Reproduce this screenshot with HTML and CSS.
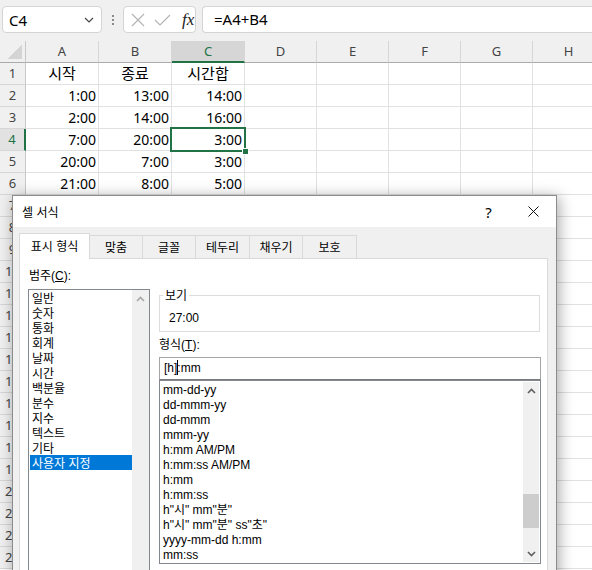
FILE: index.html
```html
<!DOCTYPE html>
<html lang="ko">
    <head>
        <meta charset="UTF-8" />
        <meta name="viewport" content="width=device-width, initial-scale=1.0" />
        <title>셀 서식 - 시간합</title>
        <link rel="stylesheet" href="styles.css">
    </head>
    <body>
        <!-- 수식 입력줄 -->
        <div class="topbar">
            <div class="namebox">
                <span>C4</span>
                <svg width="10" height="6" viewBox="0 0 10 6"><path d="M1 1 L5 5 L9 1" fill="none" stroke="#444" stroke-width="1.2"/></svg>
            </div>
            <div class="dots"><i></i><i></i><i></i></div>
            <div class="fnbox">
                <svg width="14" height="14" viewBox="0 0 14 14"><path d="M1 1 L13 13 M13 1 L1 13" stroke="#b4b4b4" stroke-width="1.2"/></svg>
                <svg width="17" height="12" viewBox="0 0 17 12"><path d="M1 6 L6 11 L16 1" fill="none" stroke="#b4b4b4" stroke-width="1.2"/></svg>
                <span class="fx">fx</span>
            </div>
            <div class="formula">=A4+B4</div>
        </div>

        <!-- 시트 -->
        <div class="grid">
            <div class="corner"></div>
            <div class="ch">A</div><div class="ch">B</div><div class="ch on">C</div><div class="ch">D</div>
            <div class="ch">E</div><div class="ch">F</div><div class="ch">G</div><div class="ch">H</div>

            <div class="rh">1</div><div class="c ctr">시작</div><div class="c ctr">종료</div><div class="c ctr">시간합</div><div class="c"></div><div class="c"></div><div class="c"></div><div class="c"></div><div class="c"></div>
            <div class="rh">2</div><div class="c">1:00</div><div class="c">13:00</div><div class="c">14:00</div><div class="c"></div><div class="c"></div><div class="c"></div><div class="c"></div><div class="c"></div>
            <div class="rh">3</div><div class="c">2:00</div><div class="c">14:00</div><div class="c">16:00</div><div class="c"></div><div class="c"></div><div class="c"></div><div class="c"></div><div class="c"></div>
            <div class="rh on">4</div><div class="c">7:00</div><div class="c">20:00</div><div class="c sel">3:00</div><div class="c"></div><div class="c"></div><div class="c"></div><div class="c"></div><div class="c"></div>
            <div class="rh">5</div><div class="c">20:00</div><div class="c">7:00</div><div class="c">3:00</div><div class="c"></div><div class="c"></div><div class="c"></div><div class="c"></div><div class="c"></div>
            <div class="rh">6</div><div class="c">21:00</div><div class="c">8:00</div><div class="c">5:00</div><div class="c"></div><div class="c"></div><div class="c"></div><div class="c"></div><div class="c"></div>
            <div class="rh">7</div><div class="c"></div><div class="c"></div><div class="c"></div><div class="c"></div><div class="c"></div><div class="c"></div><div class="c"></div><div class="c"></div>
            <div class="rh">8</div><div class="c"></div><div class="c"></div><div class="c"></div><div class="c"></div><div class="c"></div><div class="c"></div><div class="c"></div><div class="c"></div>
            <div class="rh">9</div><div class="c"></div><div class="c"></div><div class="c"></div><div class="c"></div><div class="c"></div><div class="c"></div><div class="c"></div><div class="c"></div>
            <div class="rh">10</div><div class="c"></div><div class="c"></div><div class="c"></div><div class="c"></div><div class="c"></div><div class="c"></div><div class="c"></div><div class="c"></div>
            <div class="rh">11</div><div class="c"></div><div class="c"></div><div class="c"></div><div class="c"></div><div class="c"></div><div class="c"></div><div class="c"></div><div class="c"></div>
            <div class="rh">12</div><div class="c"></div><div class="c"></div><div class="c"></div><div class="c"></div><div class="c"></div><div class="c"></div><div class="c"></div><div class="c"></div>
            <div class="rh">13</div><div class="c"></div><div class="c"></div><div class="c"></div><div class="c"></div><div class="c"></div><div class="c"></div><div class="c"></div><div class="c"></div>
            <div class="rh">14</div><div class="c"></div><div class="c"></div><div class="c"></div><div class="c"></div><div class="c"></div><div class="c"></div><div class="c"></div><div class="c"></div>
            <div class="rh">15</div><div class="c"></div><div class="c"></div><div class="c"></div><div class="c"></div><div class="c"></div><div class="c"></div><div class="c"></div><div class="c"></div>
            <div class="rh">16</div><div class="c"></div><div class="c"></div><div class="c"></div><div class="c"></div><div class="c"></div><div class="c"></div><div class="c"></div><div class="c"></div>
            <div class="rh">17</div><div class="c"></div><div class="c"></div><div class="c"></div><div class="c"></div><div class="c"></div><div class="c"></div><div class="c"></div><div class="c"></div>
            <div class="rh">18</div><div class="c"></div><div class="c"></div><div class="c"></div><div class="c"></div><div class="c"></div><div class="c"></div><div class="c"></div><div class="c"></div>
            <div class="rh">19</div><div class="c"></div><div class="c"></div><div class="c"></div><div class="c"></div><div class="c"></div><div class="c"></div><div class="c"></div><div class="c"></div>
            <div class="rh">20</div><div class="c"></div><div class="c"></div><div class="c"></div><div class="c"></div><div class="c"></div><div class="c"></div><div class="c"></div><div class="c"></div>
            <div class="rh">21</div><div class="c"></div><div class="c"></div><div class="c"></div><div class="c"></div><div class="c"></div><div class="c"></div><div class="c"></div><div class="c"></div>
            <div class="rh">22</div><div class="c"></div><div class="c"></div><div class="c"></div><div class="c"></div><div class="c"></div><div class="c"></div><div class="c"></div><div class="c"></div>
            <div class="rh">23</div><div class="c"></div><div class="c"></div><div class="c"></div><div class="c"></div><div class="c"></div><div class="c"></div><div class="c"></div><div class="c"></div>
        </div>

        <!-- 셀 서식 대화상자 -->
        <div class="dialog">
            <div class="dlg-title">
                <span class="dlg-name">셀 서식</span>
                <span class="dlg-btn help">?</span>
                <span class="dlg-btn">
                    <svg width="11" height="11" viewBox="0 0 11 11"><path d="M0.5 0.5 L10.5 10.5 M10.5 0.5 L0.5 10.5" stroke="#111" stroke-width="1"/></svg>
                </span>
            </div>
            <div class="dlg-body">
                <div class="tabs">
                    <div class="tab active">표시 형식</div>
                    <div class="tab w53">맞춤</div>
                    <div class="tab w53">글꼴</div>
                    <div class="tab w54">테두리</div>
                    <div class="tab w53">채우기</div>
                    <div class="tab w54">보호</div>
                </div>
                <div class="panel">
                    <!-- 범주 -->
                    <div class="leftcol">
                        <div class="lbl">범주(<u>C</u>):</div>
                        <div class="listbox cat">
                            <div class="items">
                                <div>일반</div>
                                <div>숫자</div>
                                <div>통화</div>
                                <div>회계</div>
                                <div>날짜</div>
                                <div>시간</div>
                                <div>백분율</div>
                                <div>분수</div>
                                <div>지수</div>
                                <div>텍스트</div>
                                <div>기타</div>
                                <div class="picked">사용자 지정</div>
                            </div>
                            <div class="sbar">
                                <div class="arrow"><svg width="9" height="6" viewBox="0 0 9 6"><path d="M1 5 L4.5 1.5 L8 5" fill="none" stroke="#a6a6a6" stroke-width="1.6"/></svg></div>
                            </div>
                        </div>
                    </div>
                    <!-- 보기 / 형식 -->
                    <div class="rightcol">
                        <fieldset class="preview">
                            <legend>보기</legend>
                            <div>27:00</div>
                        </fieldset>
                        <div class="lbl fmt">형식(<u>T</u>):</div>
                        <div class="input">[h]<span class="caret"></span>:mm</div>
                        <div class="listbox fmts">
                            <div class="items">
                                <div>mm-dd-yy</div>
                                <div>dd-mmm-yy</div>
                                <div>dd-mmm</div>
                                <div>mmm-yy</div>
                                <div>h:mm AM/PM</div>
                                <div>h:mm:ss AM/PM</div>
                                <div>h:mm</div>
                                <div>h:mm:ss</div>
                                <div>h"시" mm"분"</div>
                                <div>h"시" mm"분" ss"초"</div>
                                <div>yyyy-mm-dd h:mm</div>
                                <div>mm:ss</div>
                            </div>
                            <div class="sbar">
                                <div class="arrow"><svg width="9" height="6" viewBox="0 0 9 6"><path d="M1 5 L4.5 1.5 L8 5" fill="none" stroke="#606060" stroke-width="1.6"/></svg></div>
                                <div class="track"><div class="thumb"></div></div>
                                <div class="arrow"><svg width="9" height="6" viewBox="0 0 9 6"><path d="M1 1 L4.5 4.5 L8 1" fill="none" stroke="#606060" stroke-width="1.6"/></svg></div>
                            </div>
                        </div>
                    </div>
                </div>
            </div>
        </div>
    </body>
</html>
```

FILE: styles.css
```css
/* 공통 */
:root {
    --green: #217346;
    --grid: #e1e1e1;
    --ui: "Liberation Sans", "Noto Sans CJK KR", sans-serif;
}

body {
    margin: 0;
    width: 592px;
    height: 570px;
    overflow: hidden;
    position: relative;
    background: #fff;
    font-family: "Noto Sans CJK KR", sans-serif;
    color: #000;
}

/* 수식 입력줄 */
.topbar {
    display: flex;
    align-items: flex-start;
    height: 41px;
    padding-top: 6px;
    box-sizing: border-box;
    background: #f0f0f0;
}
.namebox {
    display: flex;
    align-items: center;
    justify-content: space-between;
    width: 100px;
    height: 27px;
    margin-left: 2px;
    padding: 0 7px 0 6px;
    box-sizing: border-box;
    border: 1px solid #d4d4d4;
    border-radius: 4px;
    background: #fff;
    font-family: "Noto Sans", sans-serif;
    font-size: 15px;
}
.dots {
    display: flex;
    flex-direction: column;
    gap: 2px;
    width: 2px;
    margin: 9px 9px 0 10px;
}
.dots i {
    width: 2px;
    height: 2px;
    background: #8a8a8a;
}
.fnbox {
    display: flex;
    align-items: center;
    gap: 9px;
    width: 73px;
    height: 27px;
    padding-left: 7px;
    box-sizing: border-box;
    border: 1px solid #d4d4d4;
    border-radius: 4px;
    background: #fff;
}
.fx {
    font-family: "Liberation Serif", serif;
    font-style: italic;
    font-size: 17px;
    color: #222;
    margin-left: 2px;
}
.formula {
    flex: 1;
    height: 27px;
    margin-left: 6px;
    padding-left: 11px;
    box-sizing: border-box;
    border: 1px solid #d4d4d4;
    border-right: none;
    border-radius: 4px 0 0 4px;
    background: #fff;
    font-family: "Noto Sans", sans-serif;
    font-size: 15px;
    line-height: 25px;
}

/* 시트 그리드 */
.grid {
    display: grid;
    grid-template-columns: 26px 73px 73px 73px 72px 72px 72px 72px 72px;
    grid-auto-rows: 22px;
}
.corner {
    border-right: 1px solid #c8c8c8;
    border-bottom: 1px solid #ababab;
    background: #f0f0f0 linear-gradient(to bottom right, transparent 50%, #d4d4d4 50%) no-repeat right 3px bottom 3px / 15px 14px;
}
.ch {
    box-sizing: border-box;
    border-right: 1px solid #d6d6d6;
    border-bottom: 1px solid #ababab;
    background: #f0f0f0;
    text-align: center;
    font-family: "Noto Sans", sans-serif;
    font-size: 13px;
    line-height: 21px;
    color: #444;
}
.ch.on {
    background: #d6d6d6;
    border-bottom: 2px solid var(--green);
    color: var(--green);
}
.rh {
    box-sizing: border-box;
    border-right: 1px solid #c8c8c8;
    border-bottom: 1px solid #d6d6d6;
    background: #f0f0f0;
    text-align: center;
    font-family: "Noto Sans", sans-serif;
    font-size: 13px;
    line-height: 21px;
    color: #444;
}
.rh.on {
    background: #e2e2e2;
    border-right: 2px solid var(--green);
    color: var(--green);
}
.c {
    box-sizing: border-box;
    border-right: 1px solid var(--grid);
    border-bottom: 1px solid var(--grid);
    padding-right: 2px;
    text-align: right;
    font-family: "Noto Sans", "Noto Sans CJK KR", sans-serif;
    font-size: 14px;
    line-height: 21px;
    white-space: nowrap;
}
.c.ctr {
    text-align: center;
    padding-right: 0;
    font-size: 15px;
}
/* 선택된 셀 */
.c.sel {
    position: relative;
}
.c.sel::after {
    content: "";
    position: absolute;
    left: -2px;
    top: -2px;
    right: -2px;
    bottom: -2px;
    border: 2px solid var(--green);
}
.c.sel::before {
    content: "";
    position: absolute;
    z-index: 1;
    right: -5px;
    bottom: -5px;
    width: 5px;
    height: 5px;
    background: var(--green);
    border: 1px solid #fff;
}

/* 대화상자 */
.dialog {
    position: absolute;
    left: 12px;
    top: 195px;
    width: 545px;
    height: 400px;
    box-sizing: border-box;
    border: 1px solid #8c8c8c;
    background: #f0f0f0;
    box-shadow: 2px 2px 14px rgba(0, 0, 0, 0.35);
    font-family: var(--ui);
    font-size: 12px;
}
.dlg-title {
    display: flex;
    align-items: center;
    height: 31px;
    background: #fff;
}
.dlg-name {
    flex: 1;
    padding-left: 9px;
    font-family: "Noto Sans CJK KR", sans-serif;
}
.dlg-btn {
    display: flex;
    align-items: center;
    justify-content: center;
    width: 45px;
    height: 31px;
}
.dlg-btn.help {
    font-family: "Noto Sans", sans-serif;
    font-size: 15px;
}
.dlg-body {
    padding: 8px 7px 0 6px;
}
.tabs {
    display: flex;
    align-items: flex-end;
    height: 23px;
}
.tab {
    box-sizing: border-box;
    height: 23px;
    border: 1px solid #d9d9d9;
    border-left: none;
    border-bottom: none;
    text-align: center;
    line-height: 22px;
    font-family: "Noto Sans CJK KR", sans-serif;
}
.tab.active {
    position: relative;
    z-index: 1;
    width: 71px;
    height: 26px;
    margin-bottom: -1px;
    border-left: 1px solid #d9d9d9;
    background: #fff;
    line-height: 24px;
}
.w53 { width: 53px; }
.w54 { width: 54px; }

.panel {
    display: flex;
    gap: 9px;
    width: 529px;
    height: 330px;
    padding: 9px 0 0 8px;
    box-sizing: border-box;
    border: 1px solid #d9d9d9;
    background: #fff;
}
.lbl {
    line-height: 16px;
    padding-left: 1px;
}
.leftcol {
    width: 122px;
}
.leftcol .lbl {
    margin-bottom: 5px;
}
.listbox {
    display: flex;
    box-sizing: border-box;
    border: 1px solid #828790;
    background: #fff;
}
.listbox .items {
    flex: 1;
    line-height: 15px;
}
.listbox .items div {
    white-space: nowrap;
}
.cat {
    height: 300px;
}
.cat .items {
    padding-left: 1px;
    font-family: "Noto Sans CJK KR", sans-serif;
}
.cat .items div {
    padding-left: 2px;
}
.cat .items .picked {
    background: #0078d7;
    color: #fff;
}
.sbar {
    display: flex;
    flex-direction: column;
    width: 17px;
    background: #f0f0f0;
}
.arrow {
    display: flex;
    align-items: center;
    justify-content: center;
    height: 17px;
}
.track {
    flex: 1;
}
.thumb {
    height: 34px;
    margin-top: 95px;
    background: #cdcdcd;
}

.rightcol {
    width: 382px;
}
.preview {
    width: 381px;
    margin: 19px 0 0;
    padding: 7px 9px 5px;
    box-sizing: border-box;
    border: 1px solid #dcdcdc;
    line-height: 16px;
    min-width: 0;
}
.preview legend {
    margin-left: -6px;
    padding: 0 2px;
    line-height: 16px;
    font-family: "Noto Sans CJK KR", sans-serif;
}
.lbl.fmt {
    margin: 5px 0 4px;
    padding-left: 0;
}
.input {
    height: 23px;
    padding-left: 4px;
    box-sizing: border-box;
    border: 1px solid #a5a5a5;
    border-bottom-color: #7a7a7a;
    line-height: 21px;
}
.caret {
    display: inline-block;
    width: 1px;
    height: 15px;
    margin-right: -1px;
    vertical-align: -3px;
    background: #000;
}
.fmts {
    height: 184px;
}
.fmts .items {
    padding: 2px 0 0 3px;
}
.fmts .sbar {
    width: 16px;
    margin: 1px 1px 1px 0;
}
```
